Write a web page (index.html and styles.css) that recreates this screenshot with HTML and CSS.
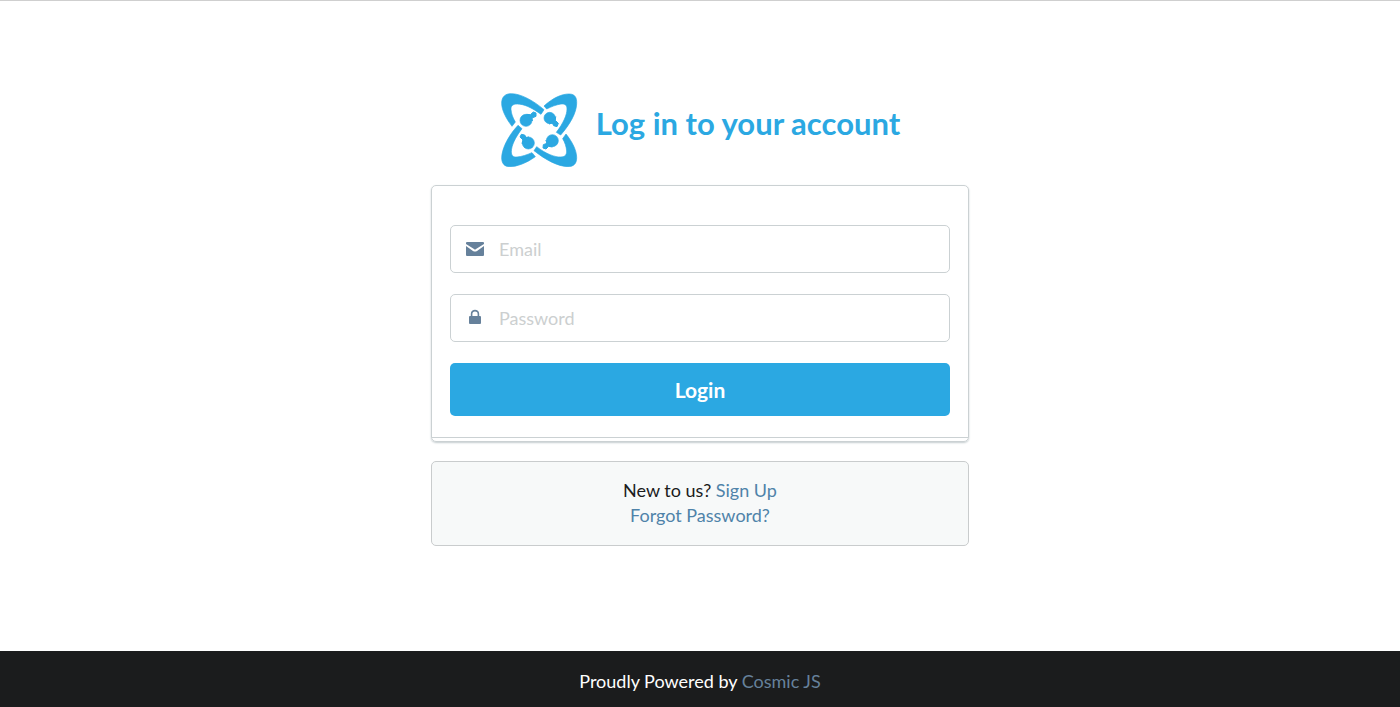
FILE: index.html
```html
<!DOCTYPE html>
<html lang="en">
<head>
<meta charset="utf-8">
<meta name="viewport" content="width=device-width, initial-scale=1">
<title>Log in to your account</title>
<link rel="stylesheet" href="styles.css">
</head>
<body>
<main class="page">
  <div class="column">
    <header class="heading">
      <svg class="logo" viewBox="36 37 228 222" aria-hidden="true">
        <g fill="currentColor" stroke="currentColor" stroke-width="2">
          <path d="M69 137C50 112 38 87 38 68C38 49 48 39 67 39C93 39 130 57 165 87L156 101C127 80 104 70 85 70C71 70 65 76 66 87C67 100 72 112 79 124Z"/>
          <path d="M165 76C191 52 219 39 242 40C258 41 264 51 263 69C262 98 242 132 215 163L202 155C224 126 234 102 234 85C234 73 228 69 216 70C202 72 187 78 173 85Z"/>
          <path d="M231 160C251 185 263 210 263 231C263 249 254 258 236 258C207 257 170 238 135 210L143 198C171 220 198 230 216 229C229 228 233 222 233 211C232 198 228 186 221 174Z"/>
          <path d="M139 228C111 248 83 258 62 258C46 258 38 248 38 231C39 202 59 164 87 134L99 144C79 170 67 195 67 213C67 224 72 230 84 229C99 228 114 222 129 216Z"/>
          <circle cx="111" cy="119" r="18"/><circle cx="182" cy="112" r="17"/>
          <circle cx="190" cy="180" r="18"/><circle cx="118" cy="187" r="18"/>
        </g>
        <g fill="currentColor" stroke="currentColor" stroke-width="3">
          <path d="M113 101L124 102L133 94L141 97L141 107L129 112L130 121Z"/>
          <path d="M200 108L199 119L208 128L204 138L194 135L190 127L180 130Z"/>
          <path d="M190 199L179 197L171 205L162 202L163 192L174 188L171 179Z"/>
          <path d="M99 189L102 178L93 169L97 161L107 163L112 171L120 169Z"/>
        </g>
      </svg>
      <h1 class="title">Log in to your account</h1>
    </header>

    <form class="card">
      <div class="card-body">
        <div class="field">
          <svg class="field-icon" viewBox="0 0 18 18" aria-hidden="true">
            <path fill="currentColor" d="M1 2H17Q18 2 18 3V4L10 9Q9 10 8 9L0 4V3Q0 2 1 2ZM0 6L7 11Q9 12 11 11L18 6V15Q18 16 17 16H1Q0 16 0 15Z"/>
          </svg>
          <input class="input" type="email" placeholder="Email" aria-label="Email">
        </div>
        <div class="field">
          <svg class="field-icon" viewBox="0 0 18 18" aria-hidden="true">
            <path fill="currentColor" d="M4 7H14Q15 7 15 8V14Q15 15 14 15H4Q3 15 3 14V8Q3 7 4 7Z"/>
            <path fill="none" stroke="currentColor" stroke-width="1.6" d="M5.6 7V5C5.6 0.5 12.4 0.5 12.4 5V7"/>
          </svg>
          <input class="input" type="password" placeholder="Password" aria-label="Password">
        </div>
        <button class="submit" type="submit">Login</button>
      </div>
    </form>

    <section class="message">
      <div>New to us? <a class="link" href="#">Sign Up</a></div>
      <div><a class="link" href="#">Forgot Password?</a></div>
    </section>
  </div>
</main>
<footer class="footer">
  <p class="credit">Proudly Powered by <a class="footer-link" href="#">Cosmic JS</a></p>
</footer>
</body>
</html>
```
FILE: styles.css
```css
* {
  box-sizing: border-box;
}

body {
  margin: 0;
  min-height: 100vh;
  display: flex;
  flex-direction: column;
  border-top: 1px solid #cfcfcf;
  background: #fff;
  color: #1b1c1d;
  font-family: Lato, "Open Sans", sans-serif;
  font-size: 18px;
  line-height: 25px;
}

.page {
  flex: 1;
  display: flex;
  justify-content: center;
  align-items: center;
  padding: 32px 16px 46px;
}

.column {
  width: 100%;
  max-width: 538px;
}

.heading {
  display: flex;
  justify-content: center;
  gap: 18px;
  margin-bottom: 18px;
  color: #2ba8e2;
}

.logo {
  width: 78px;
  height: 74px;
}

.title {
  margin: 10px 0 0;
  font-size: 31px;
  line-height: 40px;
  font-weight: 700;
}

.card {
  padding-bottom: 3px;
  border: 1px solid #cbd1d3;
  border-radius: 5px;
  box-shadow: 0 1px 2px #c5cdd0;
}

.card-body {
  display: flex;
  flex-direction: column;
  gap: 21px;
  padding: 39px 18px 21px;
  border-bottom: 1px solid #cbd1d3;
}

.field {
  display: flex;
  align-items: center;
  gap: 14px;
  height: 48px;
  padding-left: 15px;
  border: 1px solid #cbd1d3;
  border-radius: 5px;
}

.field:focus-within {
  border-color: #85b7d9;
}

.field-icon {
  flex: none;
  width: 18px;
  height: 18px;
  color: #66819b;
}

.input {
  flex: 1;
  min-width: 0;
  height: 100%;
  padding: 0 16px 0 1px;
  border: 0;
  outline: 0;
  background: transparent;
  color: #1b1c1d;
  font: inherit;
}

.input::placeholder {
  color: #cccfd0;
  opacity: 1;
}

.submit {
  height: 53px;
  padding: 0 24px;
  border: 0;
  border-radius: 5px;
  background: #2ba8e2;
  color: #fff;
  font: inherit;
  font-size: 21px;
  font-weight: 700;
  cursor: pointer;
}

.message {
  margin-top: 19px;
  padding: 16px 18px 17px;
  border: 1px solid #c9cccd;
  border-radius: 5px;
  background: #f7f9f9;
  text-align: center;
}

.link {
  color: #4f83a9;
  text-decoration: none;
}

.footer {
  padding: 18px 16px 13px;
  background: #1b1c1d;
  color: #fff;
  text-align: center;
}

.credit {
  margin: 0;
}

.footer-link {
  color: #66819b;
  text-decoration: none;
}
```
